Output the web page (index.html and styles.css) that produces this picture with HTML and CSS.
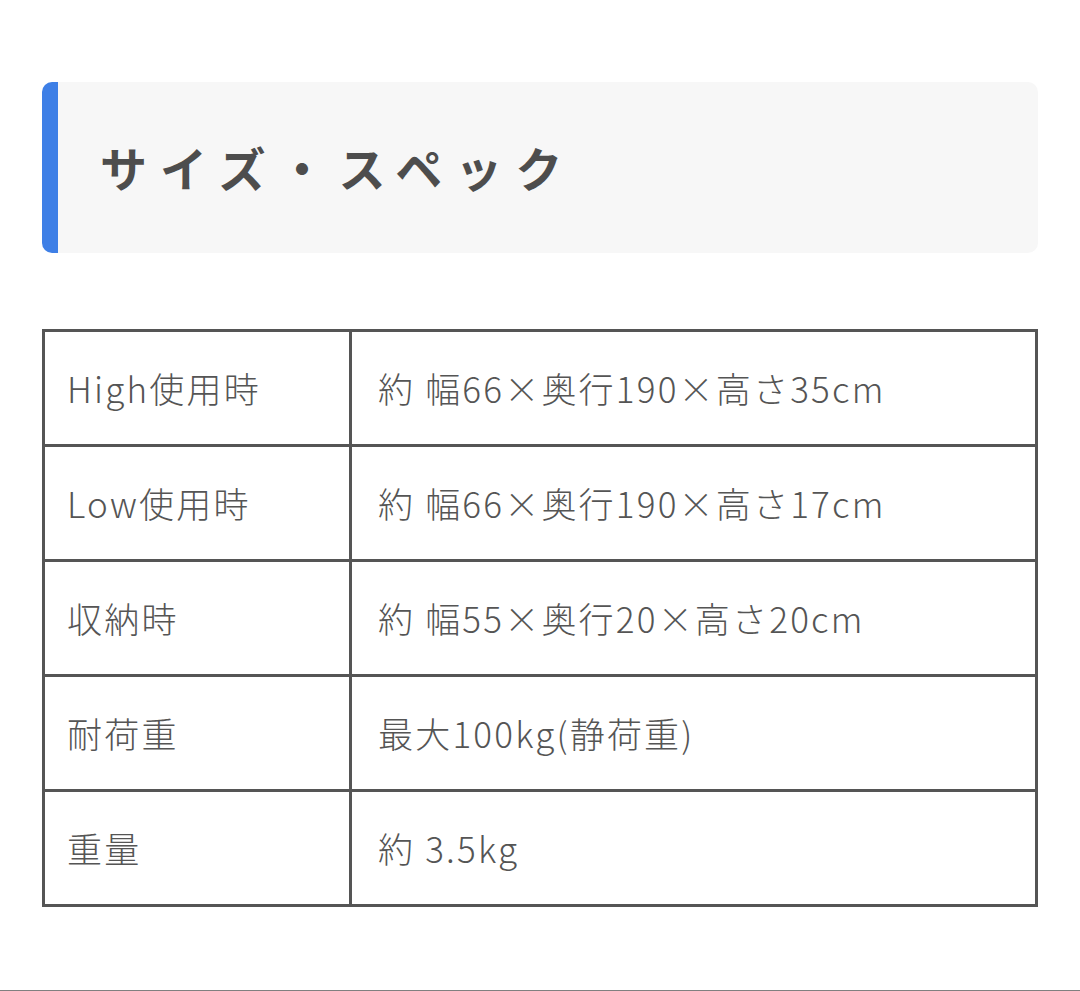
FILE: index.html
```html
<!DOCTYPE html>
<html lang="ja">
<head>
<meta charset="utf-8">
<link rel="stylesheet" href="styles.css">
</head>
<body>
<div class="page">
  <section class="spec">
    <h2 class="spec-title">サイズ・スペック</h2>
    <table class="spec-table">
      <tr><td class="label">High使用時</td><td class="value">約 幅66×奥行190×高さ35cm</td></tr>
      <tr><td class="label">Low使用時</td><td class="value">約 幅66×奥行190×高さ17cm</td></tr>
      <tr><td class="label">収納時</td><td class="value">約 幅55×奥行20×高さ20cm</td></tr>
      <tr><td class="label">耐荷重</td><td class="value">最大100kg(静荷重)</td></tr>
      <tr><td class="label">重量</td><td class="value">約 3.5kg</td></tr>
    </table>
  </section>
  <div class="bottom-rule"></div>
</div>
</body>
</html>
```
FILE: styles.css
```css
html, body {
  margin: 0;
  padding: 0;
  background: #ffffff;
}
.page {
  width: 1080px;
  height: 991px;
  display: flex;
  flex-direction: column;
  overflow: hidden;
}
.spec {
  flex: 1;
  padding: 82px 42px 0 42px;
  font-family: "Noto Sans CJK JP", "Noto Sans", sans-serif;
  color: #555555;
}
.spec-title {
  margin: 0;
  height: 171px;
  box-sizing: border-box;
  display: flex;
  align-items: center;
  padding-left: 42px;
  background: #f7f7f7;
  border-left: 16px solid #3e7fe6;
  border-radius: 10px;
  font-size: 47px;
  font-weight: 700;
  letter-spacing: 13px;
  color: #4d4d4d;
  padding-bottom: 2px;
}
.spec-table {
  margin-top: 76px;
  width: 996px;
  border-collapse: separate;
  border-spacing: 0;
  border-top: 3px solid #555555;
  border-left: 3px solid #555555;
}
.spec-table td {
  border-right: 3px solid #555555;
  border-bottom: 3px solid #555555;
  padding: 36px 24px;
  line-height: 40px;
  font-size: 35px;
  font-weight: 300;
  letter-spacing: 2.2px;
  vertical-align: middle;
  white-space: nowrap;
}
.spec-table td.label {
  width: 258px;
  padding-left: 22px;
}
.spec-table td.value {
  padding-left: 26px;
}
.bottom-rule {
  height: 1px;
  background: #808080;
  flex: none;
}
```
